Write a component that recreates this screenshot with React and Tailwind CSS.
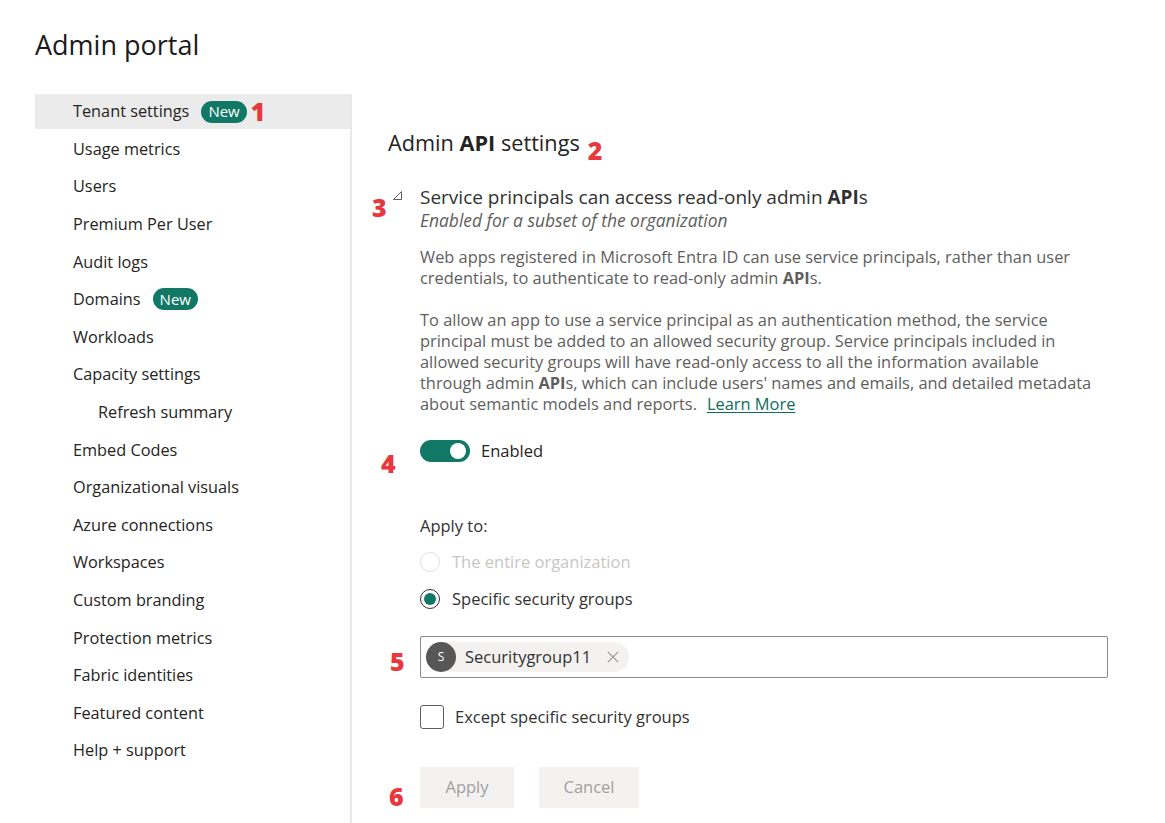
import React from "react";

const navItems = [
	{ label: "Tenant settings", badge: true, active: true, mark: "1" },
	{ label: "Usage metrics" },
	{ label: "Users" },
	{ label: "Premium Per User" },
	{ label: "Audit logs" },
	{ label: "Domains", badge: true },
	{ label: "Workloads" },
	{ label: "Capacity settings" },
	{ label: "Refresh summary", sub: true },
	{ label: "Embed Codes" },
	{ label: "Organizational visuals" },
	{ label: "Azure connections" },
	{ label: "Workspaces" },
	{ label: "Custom branding" },
	{ label: "Protection metrics" },
	{ label: "Fabric identities" },
	{ label: "Featured content" },
	{ label: "Help + support" },
];

const Mark = ({ children, className = "" }) => (
	<span
		className={`font-['Open_Sans',sans-serif] font-extrabold text-[25px] leading-none text-[#e8383d] ${className}`}
	>
		{children}
	</span>
);

const NewBadge = () => (
	<span className="ml-[12px] inline-flex items-center h-[22px] px-[7px] rounded-full bg-[#117865] text-white text-[15px] leading-none">
		New
	</span>
);

const Sidebar = () => (
	<nav className="w-[317px] shrink-0 border-r-2 border-[#e8e8e8] flex flex-col gap-[2.6px] pb-[60px]">
		{navItems.map((item) => (
			<div
				key={item.label}
				className={`h-[35px] flex items-center text-[16.3px] text-[#252423] ${
					item.sub ? "pl-[63px]" : "pl-[38px]"
				} ${item.active ? "bg-[#ebebeb]" : ""}`}
			>
				<span>{item.label}</span>
				{item.badge && <NewBadge />}
				{item.mark && <Mark className="ml-[4px]">{item.mark}</Mark>}
			</div>
		))}
	</nav>
);

const Radio = ({ checked, disabled, label }) => (
	<div className="flex items-center h-[20px]">
		<span
			className={`w-[20px] h-[20px] rounded-full border flex items-center justify-center ${
				disabled ? "border-[#e1dfdd]" : "border-[#323130]"
			}`}
		>
			{checked && <span className="w-[12px] h-[12px] rounded-full bg-[#117865]" />}
		</span>
		<span
			className={`ml-[12px] text-[16.5px] ${
				disabled ? "text-[#c8c6c4]" : "text-[#323130]"
			}`}
		>
			{label}
		</span>
	</div>
);

const App = () => {
	return (
		<div className="min-h-[823px] bg-white font-['Open_Sans',sans-serif] text-[#252423] overflow-hidden">
			<h1 className="pl-[35px] pt-[25px] text-[27px] leading-[40px] text-[#1b1a19]">
				Admin portal
			</h1>
			<div className="flex mt-[29px] pl-[35px]">
				<Sidebar />
				<main className="pl-[36px] flex-1">
					<h2 className="mt-[35px] h-[28px] flex items-center text-[21.7px] text-[#252423]">
						<span>
							Admin <b className="font-bold">API</b> settings
						</span>
						<Mark className="ml-[8px] mt-[15px]">2</Mark>
					</h2>

					<section className="pl-[32px] mt-[28px] w-[720px]">
						<div className="relative">
							<Mark className="absolute left-[-48px] top-[10px]">3</Mark>
							<svg
								className="absolute left-[-28px] top-[5px]"
								width="11"
								height="11"
								viewBox="0 0 11 11"
							>
								<polygon
									points="9.5,1.5 9.5,9.5 1.5,9.5"
									fill="none"
									stroke="#605e5c"
									strokeWidth="1"
								/>
							</svg>
							<div className="text-[19px] leading-[24px] text-[#323130]">
								Service principals can access read-only admin <b className="font-bold">API</b>s
							</div>
							<div className="text-[17.4px] leading-[22px] italic text-[#605e5c]">
								Enabled for a subset of the organization
							</div>
						</div>

						<p className="mt-[14.5px] text-[16.4px] leading-[21px] text-[#605e5c] whitespace-nowrap">
							Web apps registered in Microsoft Entra ID can use service principals, rather than user
							<br />
							credentials, to authenticate to read-only admin <b className="font-bold">API</b>s.
						</p>
						<p className="mt-[21px] text-[16.4px] leading-[21px] text-[#605e5c] whitespace-nowrap">
							To allow an app to use a service principal as an authentication method, the service
							<br />
							principal must be added to an allowed security group. Service principals included in
							<br />
							allowed security groups will have read-only access to all the information available
							<br />
							through admin <b className="font-bold">API</b>s, which can include users' names and emails, and detailed metadata
							<br />
							about semantic models and reports.
							<a href="#" className="ml-[10px] text-[#0e6d5c] underline underline-offset-2">
								Learn More
							</a>
						</p>

						<div className="relative mt-[26.5px] flex items-center h-[22px]">
							<Mark className="absolute left-[-39px] top-[11px]">4</Mark>
							<span className="w-[50px] h-[22px] rounded-full bg-[#117865] flex items-center justify-end pr-[4px]">
								<span className="w-[16px] h-[16px] rounded-full bg-white" />
							</span>
							<span className="ml-[11px] text-[16.5px] text-[#252423]">Enabled</span>
						</div>

						<div className="mt-[53px] text-[16.5px] leading-[22px] text-[#323130]">Apply to:</div>
						<div className="mt-[15px]">
							<Radio disabled label="The entire organization" />
						</div>
						<div className="mt-[17px]">
							<Radio checked label="Specific security groups" />
						</div>

						<div className="relative mt-[27px] w-[688px] h-[42px] border border-[#8a8886] rounded-[2px] flex items-center pl-[5px]">
							<Mark className="absolute left-[-31px] top-[12px]">5</Mark>
							<div className="flex items-center h-[30px] rounded-full bg-[#f3f2f1] pr-[10px]">
								<span className="w-[30px] h-[30px] rounded-full bg-[#575757] text-white text-[12px] flex items-center justify-center">
									S
								</span>
								<span className="ml-[9px] text-[16.5px] text-[#323130]">Securitygroup11</span>
								<svg className="ml-[16px]" width="12" height="12" viewBox="0 0 12 12">
									<path d="M1 1 L11 11 M11 1 L1 11" stroke="#a19f9d" strokeWidth="1.2" fill="none" />
								</svg>
							</div>
						</div>

						<label className="mt-[27px] flex items-center h-[24px]">
							<span className="w-[24px] h-[24px] border border-[#605e5c] rounded-[3px] bg-white" />
							<span className="ml-[11px] text-[16.5px] text-[#323130]">Except specific security groups</span>
						</label>

						<div className="relative mt-[38px] flex gap-[25px]">
							<Mark className="absolute left-[-31px] top-[17px]">6</Mark>
							<button className="w-[94px] h-[41px] bg-[#f3f2f1] text-[16.5px] text-[#a19f9d]">Apply</button>
							<button className="w-[100px] h-[41px] bg-[#f3f2f1] text-[16.5px] text-[#a19f9d]">Cancel</button>
						</div>
					</section>
				</main>
			</div>
		</div>
	);
};

export default App;
